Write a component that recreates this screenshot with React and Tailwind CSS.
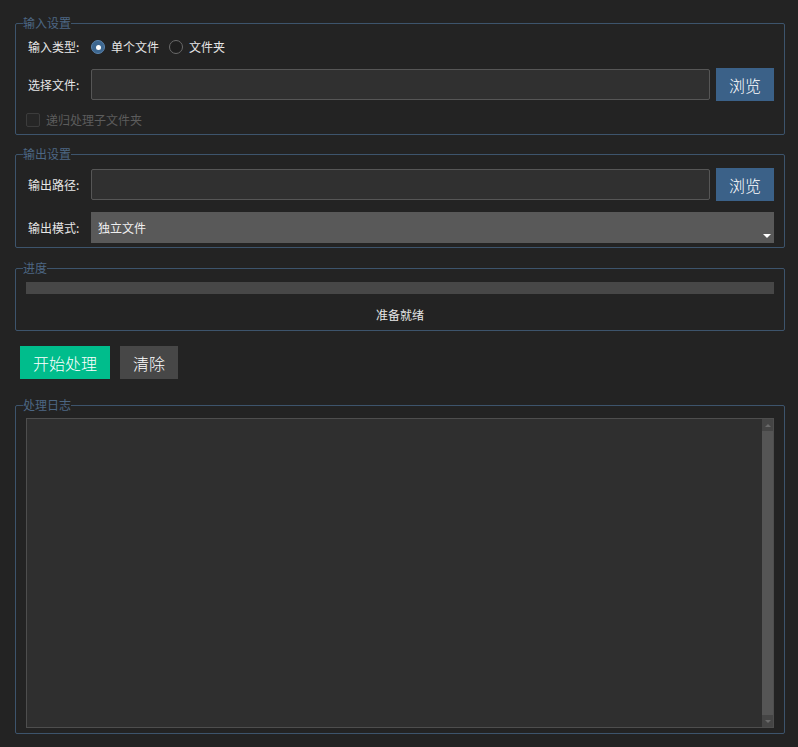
import { useState } from 'react';

const font = { fontFamily: '"Noto Sans CJK SC", "Liberation Sans", sans-serif' };

function Group({ title, className = '', bodyClass = '', children }) {
  return (
    <fieldset className={`border border-[#3d546c] rounded-[2px] p-0 ${className}`}>
      <legend className="ml-[7px] px-0 text-[12px] leading-[14px] text-[#4d6783]">{title}</legend>
      <div className={bodyClass}>{children}</div>
    </fieldset>
  );
}

function Radio({ checked, label, onClick }) {
  return (
    <button type="button" onClick={onClick} className="flex items-center gap-[6px] text-[12px] text-[#e6e6e6]">
      {checked ? (
        <span className="w-[14px] h-[14px] rounded-full bg-[#3d6790] border border-[#5b84ad] flex items-center justify-center">
          <span className="w-[5px] h-[5px] rounded-full bg-white" />
        </span>
      ) : (
        <span className="w-[14px] h-[14px] rounded-full bg-[#1e1e1e] border border-[#6a6a6a]" />
      )}
      <span>{label}</span>
    </button>
  );
}

export default function App() {
  const [inputType, setInputType] = useState('file');

  return (
    <div style={font} className="w-[798px] h-[747px] bg-[#232323] pl-[15px] pr-[13px] pt-[16px] flex flex-col overflow-hidden">
      {/* 输入设置 */}
      <Group title="输入设置" bodyClass="pl-[12px] pr-[10px] pt-[7px] pb-[7px]">
        <div className="flex items-center h-[20px]">
          <span className="w-[63px] text-[12px] text-[#e6e6e6]">输入类型:</span>
          <div className="flex items-center gap-[10px]">
            <Radio checked={inputType === 'file'} label="单个文件" onClick={() => setInputType('file')} />
            <Radio checked={inputType === 'folder'} label="文件夹" onClick={() => setInputType('folder')} />
          </div>
        </div>
        <div className="flex items-center h-[33px] mt-[11px]">
          <span className="w-[63px] text-[12px] text-[#e6e6e6]">选择文件:</span>
          <input className="flex-1 h-[31px] bg-[#303030] border border-[#565656] rounded-[2px] outline-none text-[12px] text-white px-2" />
          <button className="ml-[6px] w-[58px] h-[33px] bg-[#3b6188] text-white text-[16px] font-light">浏览</button>
        </div>
        <div className="flex items-center h-[14px] mt-[12px] -ml-[2px]">
          <span className="w-[14px] h-[14px] border border-[#3c3c3c] bg-[#262626] rounded-[2px]" />
          <span className="ml-[6px] text-[12px] text-[#5c5c5c]">递归处理子文件夹</span>
        </div>
      </Group>

      {/* 输出设置 */}
      <Group title="输出设置" className="mt-[12px]" bodyClass="pl-[12px] pr-[10px] pt-[7px] pb-[4px]">
        <div className="flex items-center h-[33px]">
          <span className="w-[63px] text-[12px] text-[#e6e6e6]">输出路径:</span>
          <input className="flex-1 h-[31px] bg-[#303030] border border-[#565656] rounded-[2px] outline-none text-[12px] text-white px-2" />
          <button className="ml-[6px] w-[58px] h-[33px] bg-[#3b6188] text-white text-[16px] font-light">浏览</button>
        </div>
        <div className="flex items-center h-[31px] mt-[11px]">
          <span className="w-[63px] text-[12px] text-[#e6e6e6]">输出模式:</span>
          <div className="relative flex-1 h-[31px] bg-[#595959] flex items-center pl-[7px] text-[12px] text-[#f0f0f0]">
            独立文件
            <span className="absolute right-[3px] bottom-[5px] w-0 h-0 border-l-[4px] border-r-[4px] border-t-[4px] border-l-transparent border-r-transparent border-t-white" />
          </div>
        </div>
      </Group>

      {/* 进度 */}
      <Group title="进度" className="mt-[13px]" bodyClass="pl-[10px] pr-[10px] pt-[7px] pb-[8px]">
        <div className="h-[12px] bg-[#474747]" />
        <div className="mt-[14px] h-[14px] leading-[14px] text-center text-[12px] text-[#e6e6e6]">准备就绪</div>
      </Group>

      {/* 按钮 */}
      <div className="flex gap-[10px] mt-[15px] pl-[5px]">
        <button className="w-[90px] h-[33px] bg-[#00bd8c] text-white text-[16px] font-light">开始处理</button>
        <button className="w-[58px] h-[33px] bg-[#474747] text-white text-[16px] font-light">清除</button>
      </div>

      {/* 处理日志 */}
      <Group title="处理日志" className="mt-[19px]" bodyClass="pl-[10px] pr-[10px] pt-[6px] pb-[5px]">
        <div className="h-[310px] bg-[#2f2f2f] border border-[#4e4e4e] flex">
          <div className="flex-1" />
          <div className="w-[11px] flex flex-col bg-[#4f4f4f]">
            <div className="h-[12px] bg-[#454545] flex items-center justify-center">
              <span className="w-0 h-0 border-l-[3px] border-r-[3px] border-b-[3px] border-l-transparent border-r-transparent border-b-[#6a6a6a]" />
            </div>
            <div className="flex-1 bg-[#555555]" />
            <div className="h-[12px] bg-[#454545] flex items-center justify-center">
              <span className="w-0 h-0 border-l-[3px] border-r-[3px] border-t-[3px] border-l-transparent border-r-transparent border-t-[#6a6a6a]" />
            </div>
          </div>
        </div>
      </Group>
    </div>
  );
}
